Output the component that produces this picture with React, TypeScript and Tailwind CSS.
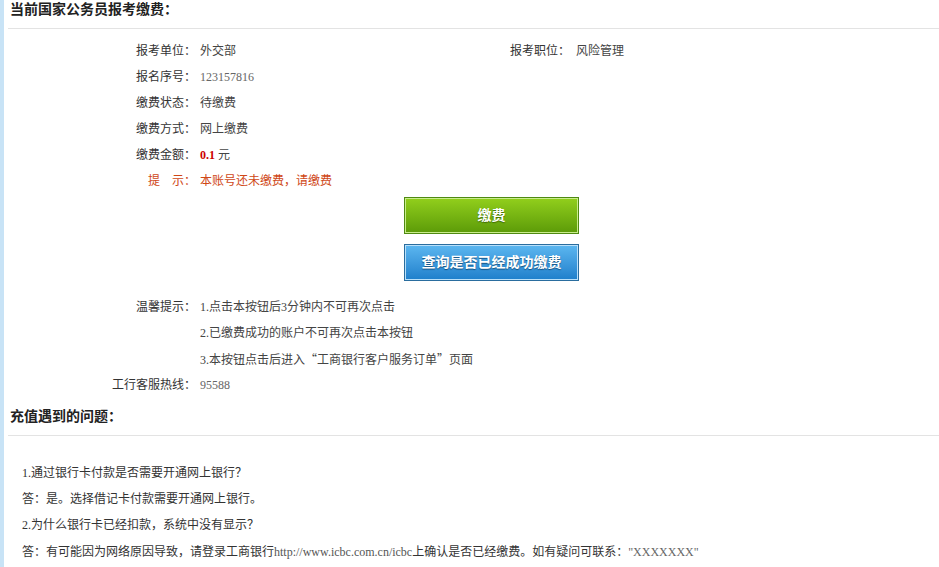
import type { ReactNode } from 'react';

const font = { fontFamily: '"Liberation Serif", "Noto Sans CJK SC", serif' };
const cjk = { fontFamily: '"Noto Sans CJK SC", sans-serif' };

const Row = ({ label, children, labelClass = 'text-[#333]' }: { label: string; children?: ReactNode; labelClass?: string }) => (
    <div className="flex h-[26px] items-center">
        <div className={`w-[192px] shrink-0 text-right ${labelClass}`}>{label}</div>
        <div className="pl-[4px] text-[#444]">{children}</div>
    </div>
);

const Title = ({ text }: { text: string }) => (
    <div className="ml-[4px] h-[29px] border-b border-[#e3e3e3]">
        <h2 className="pl-[2px] text-[14px] font-bold leading-[20px] text-[#222]">{text}</h2>
    </div>
);

const App = () => {
    return (
        <div style={font} className="min-h-screen border-l-4 border-[#c8e3f6] bg-white text-[12px]">
            {/* Payment info */}
            <Title text="当前国家公务员报考缴费：" />

            <div className="pt-[9px]">
                <div className="flex h-[26px] items-center">
                    <div className="w-[192px] shrink-0 text-right text-[#333]">报考单位：</div>
                    <div className="w-[314px] shrink-0 pl-[4px] text-[#444]">外交部</div>
                    <div className="text-[#333]">报考职位：</div>
                    <div className="pl-[6px] text-[#444]">风险管理</div>
                </div>
                <Row label="报名序号：">
                    <span className="text-[#666]">123157816</span>
                </Row>
                <Row label="缴费状态：">待缴费</Row>
                <Row label="缴费方式：">网上缴费</Row>
                <Row label="缴费金额：">
                    <span className="font-bold text-[#cc0000]">0.1</span> 元
                </Row>
                <Row label="提　示：" labelClass="text-[#cf4716]">
                    <span className="text-[#cf4716]">本账号还未缴费，请缴费</span>
                </Row>

                {/* Buttons */}
                <div className="flex flex-col gap-[10px] pl-[400px] pt-[3px]">
                    <button className="h-[37px] w-[175px] border border-[#4f8a12] bg-gradient-to-b from-[#92cf1c] to-[#5c9b08] text-[14px] font-bold text-white shadow-[inset_0_0_0_1px_#c9ec8c] [text-shadow:0_1px_1px_#3d6a05]">
                        缴费
                    </button>
                    <button className="h-[37px] w-[175px] border border-[#2a6d9e] bg-gradient-to-b from-[#5cb7f0] to-[#1d7fcb] text-[14px] font-bold text-white shadow-[inset_0_0_0_1px_#b9e0fa] [text-shadow:0_1px_1px_#14507f]">
                        查询是否已经成功缴费
                    </button>
                </div>

                {/* Tips */}
                <div className="pt-[13px]">
                    <Row label="温馨提示：">1.点击本按钮后3分钟内不可再次点击</Row>
                    <Row label="">2.已缴费成功的账户不可再次点击本按钮</Row>
                    <Row label="">
                        3.本按钮点击后进入<span style={cjk}>“</span>工商银行客户服务订单<span style={cjk}>”</span>页面
                    </Row>
                    <Row label="工行客服热线：">
                        <span className="text-[#666]">95588</span>
                    </Row>
                </div>
            </div>

            {/* FAQ */}
            <div className="pt-[9px]">
                <Title text="充值遇到的问题：" />
                <div className="pl-[18px] pt-[24px] text-[#333]">
                    <p className="flex h-[26px] items-center">1.通过银行卡付款是否需要开通网上银行？</p>
                    <p className="flex h-[26px] items-center">答：是。选择借记卡付款需要开通网上银行。</p>
                    <p className="flex h-[26px] items-center">2.为什么银行卡已经扣款，系统中没有显示？</p>
                    <p className="flex h-[27px] items-center">
                        答：有可能因为网络原因导致，请登录工商银行<span className="text-[#555]">http://www.icbc.com.cn/icbc</span>上确认是否已经缴费。如有疑问可联系：<span className="text-[#666]">"XXXXXXX"</span>
                    </p>
                </div>
            </div>
        </div>
    );
};

export default App;
